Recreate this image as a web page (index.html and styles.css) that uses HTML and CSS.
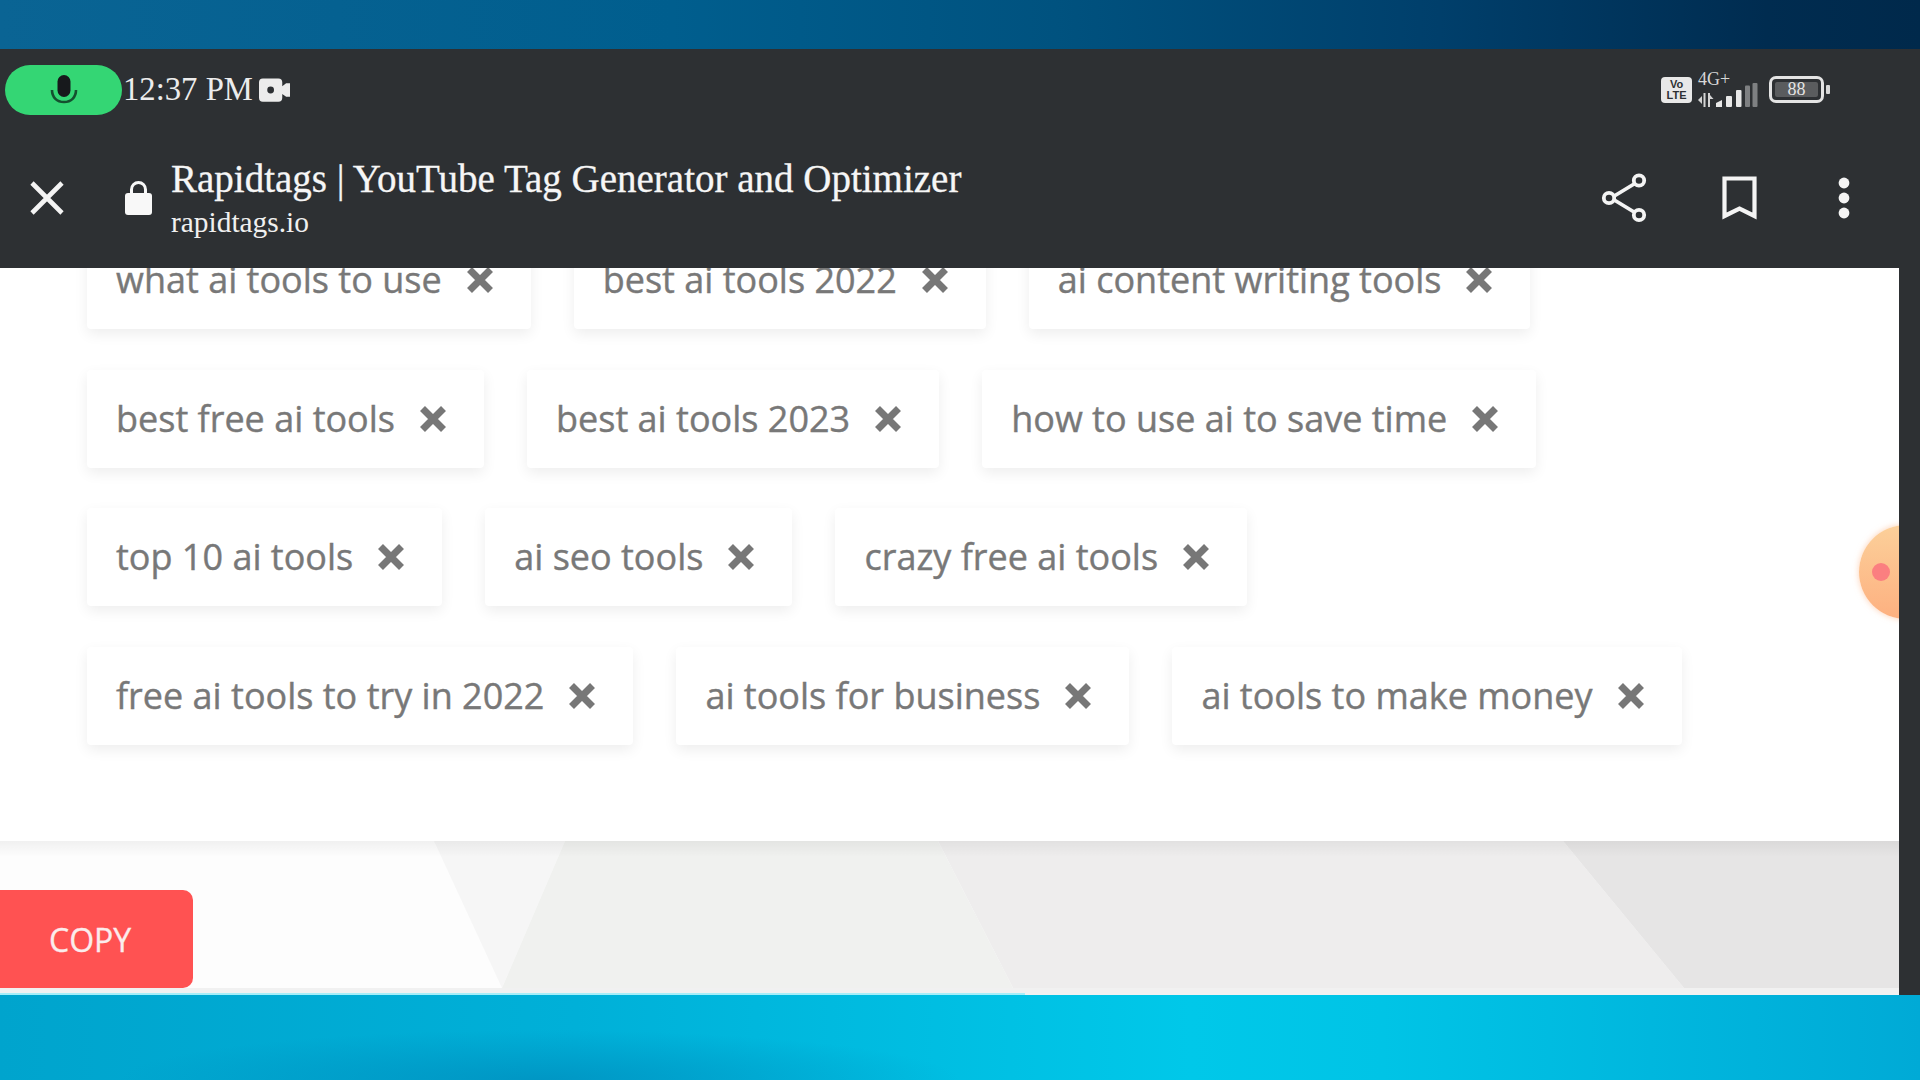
FILE: index.html
```html
<!DOCTYPE html>
<html lang="en">
<head>
<meta charset="utf-8">
<title>Rapidtags | YouTube Tag Generator and Optimizer</title>
<link rel="stylesheet" href="styles.css">
</head>
<body>
<div class="band-top"></div>
<div class="frame">
  <main class="phone">
    <header class="chrome">
      <div class="status">
        <div class="mic-pill">
          <svg class="mic" viewBox="0 0 28 32"><rect x="7.5" y="1" width="13" height="22" rx="6.5" fill="#17191c"/><path d="M2 16c0 7.5 5 12 12 12s12-4.500 12-12" fill="none" stroke="#14502f" stroke-width="2.600"/></svg>
        </div>
        <span class="time">12:37 PM</span>
        <svg class="cam" viewBox="0 0 32 24"><path d="M4 0h16a4 4 0 0 1 4 4v4l4-3h4v14h-4l-4-3v4a4 4 0 0 1-4 4H4a4 4 0 0 1-4-4V4a4 4 0 0 1 4-4z" fill="#ececec"/><circle cx="12" cy="12" r="3.500" fill="#2d3033"/></svg>
        <div class="indicators">
          <div class="volte"><span>Vo</span><span>LTE</span></div>
          <div class="signal">
            <span class="net">4G+</span>
            <svg class="bars" viewBox="0 0 60 26">
              <path d="M0 17l4-4v8zM5.500 10h2v14h-2zM10 10h2v14h-2zM12 12l3.500 4H12z" fill="#d4d4d4"/>
              <path d="M18 24v-4l6-3v7z" fill="#e8e8e8"/>
              <rect x="28" y="13" width="6" height="11" rx="1" fill="#e8e8e8"/>
              <rect x="38" y="7" width="5.500" height="17" rx="1" fill="#e8e8e8"/>
              <rect x="47" y="2.500" width="5" height="21.500" rx="1" fill="#7e8082"/>
              <rect x="54.500" y="0" width="5" height="24" rx="1" fill="#7e8082"/>
            </svg>
          </div>
          <div class="battery"><span class="battery-level">88</span></div>
          <span class="battery-tip"></span>
        </div>
      </div>
      <div class="toolbar">
        <svg class="close" viewBox="0 0 34 34"><path d="M2 2l30 30M32 2L2 32" stroke="#f4f4f4" stroke-width="4.600" fill="none"/></svg>
        <svg class="lock" viewBox="0 0 27 34"><path d="M6.500 14V8.500a7 7 0 0 1 14 0V14" fill="none" stroke="#f8f8f8" stroke-width="3"/><rect x="0" y="12" width="27" height="22" rx="3" fill="#f8f8f8"/></svg>
        <div class="page-info">
          <div class="page-title">Rapidtags | YouTube Tag Generator and Optimizer</div>
          <div class="page-url">rapidtags.io</div>
        </div>
        <svg class="share" viewBox="0 0 48 50"><path d="M10 25L38 8M10 25l28 17" stroke="#f4f4f4" stroke-width="3.800" fill="none"/><circle cx="38" cy="7.500" r="5.200" fill="#2d3033" stroke="#f4f4f4" stroke-width="3.800"/><circle cx="8" cy="25" r="5.200" fill="#2d3033" stroke="#f4f4f4" stroke-width="3.800"/><circle cx="38" cy="42" r="5.200" fill="#2d3033" stroke="#f4f4f4" stroke-width="3.800"/></svg>
        <svg class="bookmark" viewBox="0 0 35 44"><path d="M2.500 2.500h30v37.500L17.500 32.500 2.500 40z" fill="none" stroke="#f4f4f4" stroke-width="4.200"/></svg>
        <svg class="more" viewBox="0 0 12 42"><circle cx="6" cy="6" r="5.400" fill="#f4f4f4"/><circle cx="6" cy="21" r="5.400" fill="#f4f4f4"/><circle cx="6" cy="36" r="5.400" fill="#f4f4f4"/></svg>
      </div>
    </header>

    <section class="card">
      <div class="tags">
        <div class="tag"><span>what ai tools to use</span><svg class="tag-x" viewBox="0 0 28 28"><path d="M3.500 3.500l21 21M24.500 3.500l-21 21"/></svg></div>
        <div class="tag"><span>best ai tools 2022</span><svg class="tag-x" viewBox="0 0 28 28"><path d="M3.500 3.500l21 21M24.500 3.500l-21 21"/></svg></div>
        <div class="tag"><span>ai content writing tools</span><svg class="tag-x" viewBox="0 0 28 28"><path d="M3.500 3.500l21 21M24.500 3.500l-21 21"/></svg></div>
        <div class="tag"><span>best free ai tools</span><svg class="tag-x" viewBox="0 0 28 28"><path d="M3.500 3.500l21 21M24.500 3.500l-21 21"/></svg></div>
        <div class="tag"><span>best ai tools 2023</span><svg class="tag-x" viewBox="0 0 28 28"><path d="M3.500 3.500l21 21M24.500 3.500l-21 21"/></svg></div>
        <div class="tag"><span>how to use ai to save time</span><svg class="tag-x" viewBox="0 0 28 28"><path d="M3.500 3.500l21 21M24.500 3.500l-21 21"/></svg></div>
        <div class="tag"><span>top 10 ai tools</span><svg class="tag-x" viewBox="0 0 28 28"><path d="M3.500 3.500l21 21M24.500 3.500l-21 21"/></svg></div>
        <div class="tag"><span>ai seo tools</span><svg class="tag-x" viewBox="0 0 28 28"><path d="M3.500 3.500l21 21M24.500 3.500l-21 21"/></svg></div>
        <div class="tag"><span>crazy free ai tools</span><svg class="tag-x" viewBox="0 0 28 28"><path d="M3.500 3.500l21 21M24.500 3.500l-21 21"/></svg></div>
        <div class="tag"><span>free ai tools to try in 2022</span><svg class="tag-x" viewBox="0 0 28 28"><path d="M3.500 3.500l21 21M24.500 3.500l-21 21"/></svg></div>
        <div class="tag"><span>ai tools for business</span><svg class="tag-x" viewBox="0 0 28 28"><path d="M3.500 3.500l21 21M24.500 3.500l-21 21"/></svg></div>
        <div class="tag"><span>ai tools to make money</span><svg class="tag-x" viewBox="0 0 28 28"><path d="M3.500 3.500l21 21M24.500 3.500l-21 21"/></svg></div>
      </div>
    </section>

    <section class="footer">
      <svg class="footer-bg" viewBox="0 0 1899 147" preserveAspectRatio="none">
        <rect width="1899" height="147" fill="#fdfdfd"/>
        <path d="M434 0H565L502 147z" fill="#f6f6f6"/>
        <path d="M565 0H938L1013 147H502z" fill="#f0f1ef"/>
        <path d="M938 0H1563L1684 147H1013z" fill="#eeeded"/>
        <path d="M1563 0H1899V147H1684z" fill="#e6e5e5"/>
      </svg>
      <div class="footer-shade"></div>
      <button class="copy">COPY</button>
    </section>
    <div class="load-strip"><div class="load-bar"></div></div>

    <div class="float-ball"><span class="float-dot"></span></div>
  </main>
</div>
<div class="band-bottom"></div>
</body>
</html>
```
FILE: styles.css
```css
* { box-sizing: border-box; }
html, body { margin: 0; height: 100%; }
body {
  width: 1920px;
  height: 1080px;
  display: flex;
  flex-direction: column;
  overflow: hidden;
  font-family: "Open Sans", "Liberation Sans", sans-serif;
  background: #2d3033;
}
.band-top {
  height: 49px;
  flex: none;
  background: linear-gradient(90deg, #0a6494 0%, #005e8e 35%, #00527f 55%, #003f6b 75%, #002c50 92%, #00294b 100%);
}
.band-bottom {
  height: 85px;
  flex: none;
  background:
    radial-gradient(ellipse 420px 50px at 540px 100%, rgba(0, 130, 180, .55), rgba(0, 130, 180, 0)),
    linear-gradient(90deg, #00a4cd 0%, #00b0d8 30%, #00c8e9 62%, #00c4e6 72%, #00aad6 100%);
}
.frame {
  height: 946px;
  flex: none;
  background: #2d3033;
}
.phone {
  position: relative;
  width: 1899px;
  height: 946px;
  display: flex;
  flex-direction: column;
  overflow: hidden;
}

/* browser chrome */
.chrome {
  flex: none;
  height: 219px;
  background: #2d3033;
  color: #f4f4f4;
  font-family: "Liberation Serif", serif;
}
.status {
  height: 81px;
  display: flex;
  align-items: center;
  padding-left: 5px;
  padding-right: 69px;
}
.mic-pill {
  width: 117px;
  height: 50px;
  border-radius: 25px;
  background: #34d674;
  display: flex;
  align-items: center;
  justify-content: center;
}
.mic { width: 28px; height: 32px; }
.time {
  margin: 0 0 2px 1px;
  font-size: 32.700px;
  line-height: 40px;
  color: #ececec;
}
.cam { width: 31px; height: 24px; margin-left: 6px; }
.indicators {
  margin-left: auto;
  display: flex;
  align-items: center;
}
.volte {
  width: 31px;
  height: 26px;
  border-radius: 4px;
  background: #e8e8e8;
  color: #2d3033;
  font-family: "Liberation Sans", sans-serif;
  font-size: 11px;
  font-weight: 700;
  line-height: 11px;
  display: flex;
  flex-direction: column;
  align-items: center;
  justify-content: center;
}
.signal {
  position: relative;
  width: 60px;
  height: 32px;
  margin-left: 6px;
  display: flex;
  flex-direction: column;
  justify-content: flex-end;
}
.net {
  position: absolute;
  left: 0;
  top: -4px;
  font-size: 18px;
  line-height: 18px;
  color: #d8d8d8;
}
.bars { width: 60px; height: 26px; display: block; position: relative; top: 3px; }
.battery {
  width: 55px;
  height: 27px;
  margin-left: 11px;
  border: 3px solid #e4e4e4;
  border-radius: 7px;
  padding: 3px;
  display: flex;
}
.battery-level {
  flex: 1;
  border-radius: 2px;
  background: #5a5c5e;
  color: #e4e4e4;
  font-size: 18px;
  line-height: 15px;
  text-align: center;
}
.battery-tip {
  width: 4px;
  height: 9px;
  margin-left: 2px;
  border-radius: 1px;
  background: #d8d8d8;
}
.toolbar {
  height: 138px;
  padding-bottom: 2px;
  display: flex;
  align-items: center;
}
.close { width: 34px; height: 34px; margin-left: 30px; flex: none; }
.lock { width: 27px; height: 34px; margin-left: 61px; flex: none; }
.page-info { margin-left: 19px; margin-top: -2px; }
.page-title {
  font-size: 39px;
  line-height: 46px;
  color: #f6f6f6;
  white-space: nowrap;
  -webkit-text-stroke: .3px #f6f6f6;
}
.page-url {
  margin-top: 3px;
  font-size: 29.400px;
  line-height: 34px;
  color: #f0f0f0;
}
.share { width: 48px; height: 50px; flex: none; margin-left: auto; }
.bookmark { width: 35px; height: 44px; flex: none; margin-left: 73px; }
.more { width: 12px; height: 42px; flex: none; margin-left: 81px; margin-right: 49px; }

/* tags card */
.card {
  flex: none;
  height: 573px;
  background: #fff;
  overflow: hidden;
}
.tags {
  display: flex;
  flex-wrap: wrap;
  gap: 40.500px 43px;
  margin-top: -37px;
  padding: 0 100px 0 87px;
}
.tag {
  height: 98px;
  display: flex;
  align-items: center;
  gap: 24px;
  padding: 0 37px 0 29px;
  background: #fff;
  border-radius: 4px;
  box-shadow: 0 5px 14px rgba(0, 0, 0, .07);
  color: #787878;
  font-size: 36px;
  font-weight: 500;
  line-height: 48px;
  white-space: nowrap;
  -webkit-text-stroke: .4px #787878;
}
.tag-x { width: 28px; height: 28px; flex: none; }
.tag-x path { fill: none; stroke: #777; stroke-width: 7; }

/* footer */
.footer {
  position: relative;
  flex: none;
  height: 147px;
  padding-top: 49px;
}
.footer-bg { position: absolute; left: 0; top: 0; width: 100%; height: 100%; }
.footer-shade {
  position: absolute;
  left: 0;
  right: 0;
  top: 0;
  height: 16px;
  background: linear-gradient(180deg, rgba(0, 0, 0, .05), rgba(0, 0, 0, 0));
}
.copy {
  position: relative;
  display: block;
  width: 193px;
  height: 98px;
  padding: 0 0 0 49px;
  border: 0;
  border-radius: 0 10px 10px 0;
  background: #ff5252;
  color: #fbecec;
  font-family: "Open Sans", "Liberation Sans", sans-serif;
  font-size: 32px;
  font-weight: 500;
  text-align: left;
  -webkit-text-stroke: .3px #fbecec;
}
.load-strip {
  flex: none;
  height: 7px;
  background: #f1f1f1;
  display: flex;
  align-items: flex-end;
}
.load-bar { width: 1025px; height: 2px; background: #a6eef8; }

/* floating button */
.float-ball {
  position: absolute;
  left: 1859px;
  top: 476px;
  width: 94px;
  height: 94px;
  border-radius: 50%;
  background: linear-gradient(180deg, #fcd09a, #fdb080);
  box-shadow: 0 0 6px rgba(253, 176, 128, .6);
  display: flex;
  align-items: center;
}
.float-dot {
  width: 18px;
  height: 18px;
  margin-left: 13px;
  border-radius: 50%;
  background: #fb7f80;
}
```
